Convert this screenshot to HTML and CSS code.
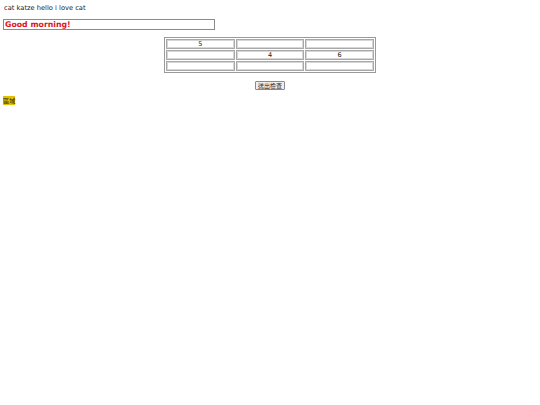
FILE: index.html
```html
<!DOCTYPE html>
<html>
<head>
<meta charset="utf-8">
<link rel="stylesheet" href="styles.css">
</head>
<body>
<p class="intro">cat katze hello i love cat</p>
<input class="greet" type="text" value="Good morning!">
<table class="grid">
  <tr><td><input class="cell" value="5"></td><td><input class="cell" value=""></td><td><input class="cell" value=""></td></tr>
  <tr><td><input class="cell" value=""></td><td><input class="cell" value="4"></td><td><input class="cell" value="6"></td></tr>
  <tr><td><input class="cell" value=""></td><td><input class="cell" value=""></td><td><input class="cell" value=""></td></tr>
</table>
<div class="actions"><button class="submit">送出檢查</button></div>
<p class="note"><span class="mark">區域</span></p>
</body>
</html>
```

FILE: styles.css
```css
html, body { background: #fff; }
body {
  margin: 4px 3px;
  font-family: "DejaVu Sans", "Noto Sans CJK TC", sans-serif;
  font-size: 6.7px;
  color: #222;
}
.intro {
  margin: 0 0 0 1px;
  line-height: 8px;
}
.greet {
  display: block;
  box-sizing: border-box;
  margin: 7px 0 0 0;
  width: 212px;
  height: 11px;
  padding: 0 1px;
  border: 1px solid #8a8a8a;
  font-family: "DejaVu Sans", sans-serif;
  font-weight: bold;
  font-size: 7.8px;
  color: #e0151b;
  line-height: 9px;
  outline: none;
}
.grid {
  margin: 7px auto 0;
  border: 1px solid #9a9a9a;
  border-spacing: 1px;
  border-collapse: separate;
}
.grid td {
  padding: 0;
  border: 1px solid #a8a8a8;
}
.cell {
  display: block;
  box-sizing: border-box;
  width: 66.6px;
  height: 8px;
  margin: 0;
  padding: 0;
  border: 1px solid #d6d6d6;
  font-family: "DejaVu Sans", sans-serif;
  font-size: 6.5px;
  line-height: 6px;
  color: #222;
  text-align: center;
  background: #fff;
  outline: none;
}
.actions {
  text-align: center;
  margin-top: 8px;
  line-height: 0;
}
.submit {
  box-sizing: border-box;
  width: 30px;
  height: 9px;
  padding: 0;
  margin: 0;
  border: 1px solid #8a8a8a;
  border-radius: 1px;
  background: #efefef;
  font-family: "Noto Sans CJK TC", sans-serif;
  font-size: 6px;
  line-height: 7px;
  color: #222;
}
.note {
  margin: 7px 0 0 0;
  line-height: 8px;
}
.mark {
  background: #e6c000;
  font-family: "Noto Sans CJK TC", sans-serif;
  font-size: 6.2px;
}
```
